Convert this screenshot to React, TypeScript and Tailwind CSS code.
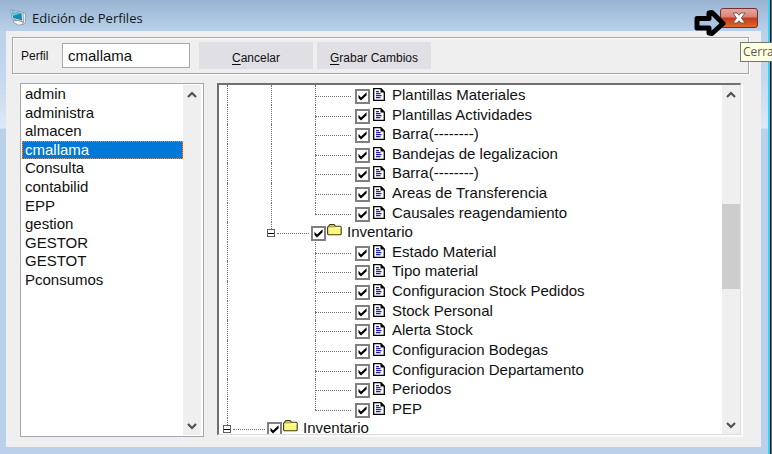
import { useState } from "react";

type Guide = "line" | "half" | "none" | "box";
type Node = { name: string; kind: "doc" | "folder"; guides: Guide[] };

const profiles = [
  "admin",
  "administra",
  "almacen",
  "cmallama",
  "Consulta",
  "contabilid",
  "EPP",
  "gestion",
  "GESTOR",
  "GESTOT",
  "Pconsumos",
];

const doc = (name: string, guides: Guide[]): Node => ({ name, kind: "doc", guides });

const nodes: Node[] = [
  doc("Plantillas Materiales", ["line", "line", "line"]),
  doc("Plantillas Actividades", ["line", "line", "line"]),
  doc("Barra(--------)", ["line", "line", "line"]),
  doc("Bandejas de legalizacion", ["line", "line", "line"]),
  doc("Barra(--------)", ["line", "line", "line"]),
  doc("Areas de Transferencia", ["line", "line", "line"]),
  doc("Causales reagendamiento", ["line", "line", "half"]),
  { name: "Inventario", kind: "folder", guides: ["line", "box"] },
  doc("Estado Material", ["line", "none", "line"]),
  doc("Tipo material", ["line", "none", "line"]),
  doc("Configuracion Stock Pedidos", ["line", "none", "line"]),
  doc("Stock Personal", ["line", "none", "line"]),
  doc("Alerta Stock", ["line", "none", "line"]),
  doc("Configuracion Bodegas", ["line", "none", "line"]),
  doc("Configuracion Departamento", ["line", "none", "line"]),
  doc("Periodos", ["line", "none", "line"]),
  doc("PEP", ["line", "none", "half"]),
  { name: "Inventario", kind: "folder", guides: ["box"] },
];

function DocIcon() {
  return (
    <svg width="12" height="13" viewBox="0 0 12 13" className="shrink-0" aria-hidden="true">
      <path d="M.7.7h7.300l3.300 3.300v8.300H.7z" fill="#fff" stroke="#000" strokeWidth="1.300" />
      <path d="M7.500.5v4h4z" fill="#000" />
      <path d="M3 3.600h3M3 5.600h4.500M3 7.600h5.500M3 9.600h4.500" stroke="#2020b0" strokeWidth="1.100" />
    </svg>
  );
}

function FolderIcon() {
  return (
    <svg width="15" height="12" viewBox="0 0 15 12" className="shrink-0" aria-hidden="true">
      <path
        d="M.6 10V3.200L3 .6h4l1.400 1.600h4.600l1.200 1V10l-.8.8H1.400z"
        fill="#fbf87c"
        stroke="#3c3a10"
        strokeWidth="1.100"
      />
      <path d="M1.200 3h6.600" stroke="#6a6820" />
      <path d="M1.500 4h12" stroke="#fffdc4" />
    </svg>
  );
}

function Chevron({ up = false }: { up?: boolean }) {
  return (
    <svg width="10" height="8" viewBox="0 0 10 8" aria-hidden="true">
      <path
        d={up ? "M1 6l4-4 4 4" : "M1 2l4 4 4-4"}
        fill="none"
        stroke="#505050"
        strokeWidth="2.200"
      />
    </svg>
  );
}

function ScrollBar({ thumb = false }: { thumb?: boolean }) {
  return (
    <div className="flex w-[18px] shrink-0 flex-col bg-[#efefef]">
      <button aria-label="Subir" className="flex h-5 items-center justify-center">
        <Chevron up />
      </button>
      <div className="flex-1">
        {thumb && (
          <>
            <div className="h-[99px]" />
            <div className="h-[85px] bg-[#cdcdcd]" />
          </>
        )}
      </div>
      <button aria-label="Bajar" className="flex h-[18px] items-center justify-center">
        <Chevron />
      </button>
    </div>
  );
}

function GuideCell({ kind }: { kind: Guide }) {
  const last = kind === "box";
  return (
    <span className="relative w-[44px] shrink-0">
      {kind === "line" && <span className="block h-full border-l border-dotted border-[#707070]" />}
      {(kind === "half" || last) && (
        <span className="block h-[11px] border-l border-dotted border-[#707070]" />
      )}
      {last && (
        <button
          aria-label="Contraer"
          className="absolute -left-1 top-[7px] flex size-2 items-center border border-[#606060] bg-white"
        >
          <span className="h-px w-full bg-black" />
        </button>
      )}
    </span>
  );
}

function TreeRow({ node, id }: { node: Node; id: string }) {
  const [on, setOn] = useState(true);
  const guides = node.guides;
  const folder = node.kind === "folder";
  return (
    <li className="flex min-h-0 whitespace-nowrap">
      {guides.slice(0, -1).map((g, i) => (
        <GuideCell key={i} kind={g} />
      ))}
      <span className="flex w-10 shrink-0">
        <span className="-mr-[44px] flex">
          <GuideCell kind={guides[guides.length - 1]} />
        </span>
        <span
          className={
            folder
              ? "ml-1.5 mt-[11px] h-px w-8 border-t border-dotted border-[#707070]"
              : "mt-[11px] h-px w-9 border-t border-dotted border-[#707070]"
          }
        />
      </span>
      <span className="mt-1 grid size-[15px] shrink-0">
        <input
          id={id}
          type="checkbox"
          checked={on}
          onChange={() => setOn(!on)}
          className="col-start-1 row-start-1 size-[15px] appearance-none border-2 border-[#808080] bg-white"
        />
        {on && (
          <svg
            viewBox="0 0 15 15"
            className="pointer-events-none col-start-1 row-start-1 size-[15px]"
            aria-hidden="true"
          >
            <path d="M3.500 5.800v3.200L6 11.600l5.600-5.400V3.200L6 8.600z" fill="#000" />
          </svg>
        )}
      </span>
      <label htmlFor={id} className="flex items-start">
        <span className={folder ? "ml-px mt-0.5 w-5" : "ml-[3px] mt-[3px] w-[19px]"}>
          {folder ? <FolderIcon /> : <DocIcon />}
        </span>
        <span className="leading-5">{node.name}</span>
      </label>
    </li>
  );
}

export default function App() {
  const [selected, setSelected] = useState("cmallama");
  return (
    <div className="relative flex min-h-screen overflow-hidden bg-[#b9d1ea] font-['Liberation_Sans',Arial,sans-serif] text-[#101010]">
      <main className="flex min-w-0 flex-1 flex-col bg-[linear-gradient(#98b4d2_0px,#b9d1ea_31px,#c4d9ef_80px,#dce9f6_128px,#b9d1ea_129px)] pb-[7px] pl-1.5 pr-[7px]">
        <header className="flex h-[31px] items-center justify-between pl-1 pr-[3px]">
          <div className="flex items-center gap-1.5 pt-1">
            <svg width="16" height="17" viewBox="0 0 16 17" aria-hidden="true">
              <path d="M12.600 3.500l2.900 1v9.500l-2.600 1.500z" fill="#e8edf0" stroke="#7f8d98" strokeWidth=".7" />
              <path d="M3.500 12l5-.5 4.500 1.500v2.200l-4.500 1-5-2.700z" fill="#f2f2ee" stroke="#85888a" strokeWidth=".7" />
              <path d="M.6.9l12.200 2.300.6 9.600L2.200 9.800z" fill="#f4f7f9" stroke="#7f8d98" strokeWidth=".8" />
              <path d="M1.900 2.300l9.600 1.800.6 7.300-9-2.400z" fill="#1689b5" />
              <path d="M1.900 2.300l9.600 1.800L2.700 7z" fill="#62c4dd" />
            </svg>
            <h1 className="font-['Open_Sans','Noto_Sans',sans-serif] text-[13px] leading-4 text-[#101820]">
              Edición de Perfiles
            </h1>
          </div>
          <button
            aria-label="Cerrar"
            className="mt-1 flex h-5 w-[38px] items-center justify-center rounded-[3px] border border-[#6e2f35] bg-[linear-gradient(#e8a89c,#d98072_45%,#c4391c_50%,#e0682c)]"
          >
            <svg width="14" height="12" viewBox="0 0 14 12" aria-hidden="true">
              <path
                d="M1 1h4l2 2.300L9 1h4L9.500 6l3.500 5H9L7 8.700 5 11H1l3.500-5z"
                fill="#fff"
                stroke="#6c5c62"
                strokeWidth="1"
              />
            </svg>
          </button>
        </header>

        <div className="flex flex-1 flex-col bg-[#efefef] px-1.5 pt-1.5">
          <form
            onSubmit={(e) => e.preventDefault()}
            className="mr-1.5 flex h-[37px] items-center border border-[#a8a8a8] pl-2 shadow-[inset_1px_1px_#fff,1px_1px_#fff]"
          >
            <label htmlFor="perfil" className="w-[41px] text-[12px]">
              Perfil
            </label>
            <input
              id="perfil"
              defaultValue="cmallama"
              className="h-[25px] w-32 border border-[#a5a7b3] bg-white px-[5px] text-[15px]"
            />
            <button className="ml-[9px] h-[27px] w-[114px] bg-[#e0dfe4] pt-1 text-[12px]">
              <span className="underline underline-offset-2">C</span>ancelar
            </button>
            <button className="ml-1 h-[27px] w-[114px] bg-[#e0dfe4] pt-1 text-[12px]">
              <span className="underline underline-offset-2">G</span>rabar Cambios
            </button>
          </form>

          <div className="mt-[9px] flex flex-1 items-start gap-[13px] pb-2.5 pl-2 pr-3.5">
            <section className="flex h-[354px] w-[184px] shrink-0 border border-[#a5a7b3] bg-white p-px pr-0.5">
              <ul className="grid h-[204px] min-w-0 flex-1 auto-rows-fr text-[15px]">
                {profiles.map((p) => (
                  <li key={p} className="flex min-h-0">
                    <button
                      onClick={() => setSelected(p)}
                      className={
                        p === selected
                          ? "w-full border border-dotted border-[#ff8728] bg-[#0078d7] pl-0.5 text-left leading-4 text-white"
                          : "w-full border border-transparent pl-0.5 text-left leading-4"
                      }
                    >
                      {p}
                    </button>
                  </li>
                ))}
              </ul>
              <ScrollBar />
            </section>

            <section className="flex h-[352px] min-w-0 flex-1 overflow-hidden border-b border-l-2 border-r border-t-2 border-b-[#dedede] border-l-[#707070] border-r-[#dedede] border-t-[#707070] bg-white shadow-[2px_2px_#fafafa]">
              <ul className="grid h-[353px] min-w-0 flex-1 auto-rows-fr overflow-hidden pl-2 text-[15px]">
                {nodes.map((n, i) => (
                  <TreeRow key={i} node={n} id={`node-${i}`} />
                ))}
              </ul>
              <ScrollBar thumb />
            </section>
          </div>
        </div>
      </main>
      <div className="w-0.5 bg-[#35d3f5]" />
      <div className="w-0.5 border-r border-[#6e6e6e] bg-[#101418]" />

      <svg
        width="32"
        height="28"
        viewBox="0 0 32 28"
        className="absolute right-[46px] top-[9px]"
        aria-hidden="true"
      >
        <path
          d="M3 9.500h12V4l3-.5 11 11L18 24.500l-3-.5v-5H3z"
          fill="#a9c4e0"
          stroke="#000"
          strokeWidth="5"
          strokeLinejoin="round"
        />
      </svg>
      <div
        role="tooltip"
        className="absolute right-0 top-[42px] flex h-5 w-8 items-center whitespace-nowrap border border-r-0 border-[#767676] bg-[#ffffe1] pl-0.5 font-['Open_Sans','Noto_Sans',sans-serif] text-[12px] text-[#575757]"
      >
        Cerra
      </div>
    </div>
  );
}
